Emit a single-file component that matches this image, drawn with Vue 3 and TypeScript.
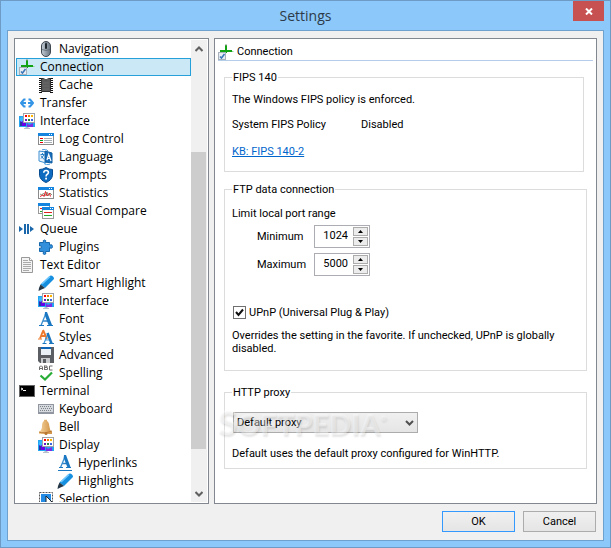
<script setup lang="ts">
import { computed, ref } from 'vue'

interface TreeItem {
  label: string
  icon: string
  level: number
}

const items: TreeItem[] = [
  { label: 'Navigation', icon: 'mouse', level: 1 },
  { label: 'Connection', icon: 'connection', level: 0 },
  { label: 'Cache', icon: 'chip', level: 1 },
  { label: 'Transfer', icon: 'transfer', level: 0 },
  { label: 'Interface', icon: 'display', level: 0 },
  { label: 'Log Control', icon: 'log', level: 1 },
  { label: 'Language', icon: 'language', level: 1 },
  { label: 'Prompts', icon: 'shield', level: 1 },
  { label: 'Statistics', icon: 'stats', level: 1 },
  { label: 'Visual Compare', icon: 'compare', level: 1 },
  { label: 'Queue', icon: 'queue', level: 0 },
  { label: 'Plugins', icon: 'puzzle', level: 1 },
  { label: 'Text Editor', icon: 'document', level: 0 },
  { label: 'Smart Highlight', icon: 'marker', level: 1 },
  { label: 'Interface', icon: 'display', level: 1 },
  { label: 'Font', icon: 'font', level: 1 },
  { label: 'Styles', icon: 'styles', level: 1 },
  { label: 'Advanced', icon: 'floppy', level: 1 },
  { label: 'Spelling', icon: 'spelling', level: 1 },
  { label: 'Terminal', icon: 'terminal', level: 0 },
  { label: 'Keyboard', icon: 'keyboard', level: 1 },
  { label: 'Bell', icon: 'bell', level: 1 },
  { label: 'Display', icon: 'display', level: 1 },
  { label: 'Hyperlinks', icon: 'hyperlink', level: 2 },
  { label: 'Highlights', icon: 'marker', level: 2 },
  { label: 'Selection', icon: 'selection', level: 1 },
]

const selected = ref(1)
const minPort = ref(1024)
const maxPort = ref(5000)
const upnp = ref(true)
const proxy = ref('default')

const scroll = { before: 95, thumb: 297, after: 36 }
const current = computed(() => items[selected.value])
</script>

<template>
  <div class="window">
    <svg class="defs" width="0" height="0" aria-hidden="true">
      <linearGradient id="g-blue" x1="0" y1="0" x2="1" y2="1">
        <stop offset="0" stop-color="#5fb4ee" />
        <stop offset="1" stop-color="#0d5fa8" />
      </linearGradient>
      <linearGradient id="g-steel" x1="0" y1="0" x2="1" y2="0">
        <stop offset="0" stop-color="#c3ccd4" />
        <stop offset="1" stop-color="#66727e" />
      </linearGradient>
      <linearGradient id="g-gold" x1="0" y1="0" x2="1" y2="0">
        <stop offset="0" stop-color="#f6d39c" />
        <stop offset="1" stop-color="#cf9144" />
      </linearGradient>
      <symbol id="mouse" viewBox="0 0 16 16">
        <rect x="3.500" y=".5" width="9" height="15" rx="4.500" fill="url(#g-steel)" stroke="#3f4851" />
        <path d="M8 1v7M4 8.500q4 2 8 0" fill="none" stroke="#56616c" stroke-width=".7" />
        <rect x="7" y="2" width="2" height="6" rx="1" fill="#20272e" />
      </symbol>
      <symbol id="connection" viewBox="0 0 16 16">
        <path d="M9 7.500h6.500" stroke="#8fd48f" stroke-width="1" />
        <path d="M7 1h2v8h-2zM2 6h12v2h-12z" fill="#12a312" />
        <path d="M7.500 0h1v2h-1z" fill="#8a9a8a" />
        <rect x=".5" y="8.500" width="7" height="7" fill="#e8edf3" stroke="#a9b2bb" />
        <path d="M2 12.500l1.500 1.500L6.500 10" fill="none" stroke="#3b76b8" stroke-width="1.500" />
      </symbol>
      <symbol id="chip" viewBox="0 0 16 16">
        <path d="M2.500 1v15M13.500 1v15" stroke="#111" stroke-width="3" stroke-dasharray="1 1" />
        <path d="M3.500 1.500h2q2.500 3 5 0h2v13h-9z" fill="#5c5c5c" stroke="#303030" />
        <path d="M5 6h6M5 9h6M5 12h6" stroke="#686868" />
      </symbol>
      <symbol id="transfer" viewBox="0 0 16 16">
        <path d="M6.500 4.500H5L2 8l3 3.500h1.500M9.500 4.500H11L14 8l-3 3.500H9.500" fill="none" stroke="#3494e6" stroke-width="2" stroke-linejoin="round" />
        <path d="M2 7h5v2H2zM9 7h5v2H9z" fill="#3494e6" />
      </symbol>
      <symbol id="display" viewBox="0 0 16 16">
        <path d="M0 3h14v3h2v8H0z" fill="#24a5f1" />
        <path d="M1 6h6v7H1z" fill="#6500e8" />
        <path d="M1 9h2v4H1z" fill="#2636a3" />
        <path d="M8 10l2 2 4-2v4H8z" fill="#7a2de5" />
        <path d="M1 5l2-1 2 2-2 3-2-1z" fill="#36bafd" />
        <path d="M5 15.500h6M6.500 14.500h3" stroke="#b5c0cb" />
        <rect x="4.500" y=".5" width="11" height="9" fill="#fff" stroke="#9da3a8" />
        <path d="M6 2h2v2H6z" fill="#f00" /><path d="M9 2h2v2H9z" fill="#f37a00" /><path d="M12 2h2v2h-2z" fill="#ffb400" />
        <path d="M6 6h2v2H6z" fill="#6319c8" /><path d="M9 6h2v2H9z" fill="#24813a" /><path d="M12 6h2v2h-2z" fill="#3b65dd" />
      </symbol>
      <symbol id="log" viewBox="0 0 16 16">
        <rect x=".5" y="2.500" width="15" height="11" fill="#fff" stroke="#8b8b8b" />
        <path d="M0 2h16v3H0z" fill="#1584df" /><path d="M11 3.500h1M13 3.500h1" stroke="#fff" />
        <path d="M2 7.500h3" stroke="#ef0000" /><path d="M2 9.500h3" stroke="#00a526" /><path d="M2 11.500h3" stroke="#ef0000" />
        <path d="M6 7.500h8M6 9.500h8M6 11.500h8" stroke="#a6aeb5" />
      </symbol>
      <symbol id="language" viewBox="0 0 16 16">
        <path d="M1 2l7 1v11l-7-2z" fill="#eef6fd" stroke="#3c8fd2" />
        <path d="M7 2l7 2v10l-7-1z" fill="#176db9" stroke="#0e5ca0" />
        <path d="M2.500 5.500h4M4.500 4v2M3 9.500l3-3.500M3 6.500l3 4" fill="none" stroke="#2a80c6" />
        <path d="M9 11l1.700-5.500L13 12M9.500 9.500h3" fill="none" stroke="#fff" stroke-width="1.200" />
        <path d="M4 .8q4-1.500 6 1M12 15.200q-4 1.300-6-.7" fill="none" stroke="#4d9ddd" />
      </symbol>
      <symbol id="shield" viewBox="0 0 16 16">
        <path d="M8 .5q3 2 6.500 2v6q-1 5-6.500 7-5.500-2-6.500-7v-6Q5 2.500 8 .5z" fill="#0f6bc0" stroke="#084d91" />
        <path d="M5.700 5.700q.2-2.200 2.400-2.200 2.300 0 2.300 2 0 1.300-1.400 2-.9.500-.9 1.900" fill="none" stroke="#fff" stroke-width="1.600" />
        <rect x="7.200" y="10.700" width="1.800" height="1.800" fill="#fff" />
      </symbol>
      <symbol id="stats" viewBox="0 0 16 16">
        <rect x=".5" y="2.500" width="15" height="11" fill="#fff" stroke="#8b8b8b" />
        <path d="M0 2h16v3H0z" fill="#1584df" /><path d="M11 3.500h1M13 3.500h1" stroke="#fff" />
        <path d="M2 9l2 1 1.500-2L7 11l2-4 1.500 4L12 8l2 2" fill="none" stroke="#8b9a7e" />
        <path d="M2 11.500l3-1.500 1 1.500L7.500 6.500 9 11l2.500-3 1 3.500" fill="none" stroke="#e3242c" />
      </symbol>
      <symbol id="compare" viewBox="0 0 16 16">
        <rect x=".5" y=".5" width="11" height="10" fill="#fff" stroke="#999" />
        <path d="M0 0h12v3H0z" fill="#1584df" /><path d="M2 5.500h3" stroke="#e32020" /><path d="M2 8.500h3" stroke="#24ab2a" />
        <rect x="4.500" y="4.500" width="11" height="11" fill="#fff" stroke="#999" />
        <path d="M4 4h12v3H4z" fill="#1584df" /><path d="M12 5.500h1M14 5.500h1" stroke="#fff" />
        <path d="M6 9.500h8" stroke="#e32020" /><path d="M6 12.500h8" stroke="#24ab2a" />
      </symbol>
      <symbol id="queue" viewBox="0 0 16 16">
        <path d="M0 5l4 3-4 3zM11 5l4 3-4 3z" fill="#1b67ab" /><path d="M5 3h2v10H5zM8 3h2v10H8z" fill="#1b67ab" />
      </symbol>
      <symbol id="puzzle" viewBox="0 0 16 16">
        <path d="M1.500 3.500h4q-1-2.500 1-2.500t1 2.500h4V6q3-1.200 3 1.500t-3 1.200v3.800h-4q1.200 3-1 3t-1-3h-4V9q2 1 2-1t-2-1z" fill="#318fdb" stroke="#1769ae" />
      </symbol>
      <symbol id="document" viewBox="0 0 16 16">
        <path d="M2.500.5h8l3 3v12h-11z" fill="#f4f4f4" stroke="#999" /><path d="M10.500.5v3h3" fill="#fff" stroke="#999" />
        <path d="M4 3.500h5M4 5.500h8M4 7.500h8M4 9.500h8M4 11.500h8M4 13.500h6" stroke="#aaa" />
      </symbol>
      <symbol id="marker" viewBox="0 0 16 16">
        <path d="M2.500 9.500L11 1.500q2-2 4 0t0 3.500L7 13z" fill="#168fdf" />
        <path d="M4 9l8-7.500" stroke="#72caff" stroke-width="1.500" />
        <path d="M2.500 9.500L7 13l-3 1.200-3.500 1.800.5-3z" fill="#253746" />
      </symbol>
      <symbol id="font" viewBox="0 0 16 16">
        <path d="M3 14.500L7.800 2.500M5 10h6" fill="none" stroke="url(#g-blue)" stroke-width="1.300" />
        <path d="M7 1h2l5 13h-3.500L6.700 4z" fill="#1a77c2" /><path d="M1 14h5v1H1zM9 14h6v1H9z" fill="#1a77c2" />
      </symbol>
      <symbol id="styles" viewBox="0 0 16 16">
        <path d="M2 9.500L5 2M3 7h4.500M5 1l4 9" fill="none" stroke="#ee782b" stroke-width="1.900" />
        <path d="M0 10h4M7 9.500h2" stroke="#ee782b" />
        <path d="M6 14l4-9M7 11h5" fill="none" stroke="#3d98dc" stroke-width="1.200" />
        <path d="M9.500 4l4 10.500" stroke="#1c76be" stroke-width="2.500" />
        <path d="M4.500 14.500h4M11 14.500h5" stroke="#1c76be" />
      </symbol>
      <symbol id="floppy" viewBox="0 0 16 16">
        <path d="M0 0h16v16H2l-2-2z" fill="#5b5f63" /><path d="M3 0h10v8H3z" fill="#eaf2f8" />
        <path d="M3 0h10v2H3z" fill="#0e64b4" /><path d="M3 11h9v5H3z" fill="#c9cdd0" /><path d="M5 12h3v4H5z" fill="#5b5f63" />
      </symbol>
      <symbol id="spelling" viewBox="0 0 16 16">
        <path d="M1.500 5V2l1-1h1l1 1v3M1.500 3.500h3M6.500.5V5M6.500 1h2.500v1.500h-2M7 4.500h2.500v-2M14.500 1h-3v4h3" fill="none" stroke="#6f6f6f" />
        <path d="M2.500 10.500L7 14.500 14 7.500" fill="none" stroke="#27ad35" stroke-width="2.200" />
      </symbol>
      <symbol id="terminal" viewBox="0 0 16 16">
        <path d="M0 2h16v12H0z" fill="#666" /><path d="M1 3h14v10H1z" fill="#000" /><path d="M2 5l2 1-2 1M4 7.500h3" fill="none" stroke="#fff" />
      </symbol>
      <symbol id="keyboard" viewBox="0 0 16 16">
        <rect x="0" y="3" width="16" height="10" fill="#9097a0" /><path d="M1 4h14v7H1z" fill="#d6dade" />
        <path d="M2 5.500h12M3 7.500h11M2 9.500h12" stroke="#7c838b" stroke-dasharray="1 1" />
      </symbol>
      <symbol id="bell" viewBox="0 0 16 16">
        <path d="M6 2V.8h3V2q2 1 2.300 5 .3 4 2.700 6v2H1v-2q3-2 3-6t2-5z" fill="url(#g-gold)" />
        <path d="M1 13q5 2 13-1" fill="none" stroke="#b87633" /><circle cx="8" cy="14.500" r="1.500" fill="#b97832" />
      </symbol>
      <symbol id="hyperlink" viewBox="0 0 16 16">
        <path d="M3.500 12.500L8 1.500M5 8.500h6" fill="none" stroke="url(#g-blue)" stroke-width="1.300" />
        <path d="M7 0h2l4.500 12h-3.200L6.700 3z" fill="#1a77c2" /><path d="M2 12h4v1H2zM9 12h5v1H9zM1 15h14v1H1z" fill="#1a77c2" />
      </symbol>
      <symbol id="selection" viewBox="0 0 16 16">
        <rect x="1.500" y="1.500" width="13" height="13" fill="none" stroke="#555" stroke-dasharray="2 1" />
        <path d="M3 3h10v10H3z" fill="#238be3" /><path d="M8 5l6 6-3 .5L13 15l-2 1-1.500-3L8 14z" fill="#fff" stroke="#14242f" />
      </symbol>
    </svg>

    <header class="titlebar">
      <h1 class="title">Settings</h1>
      <button class="close" type="button" aria-label="Close">
        <svg width="8" height="7" viewBox="0 0 8 7"><path d="M1 .5l6 6M7 .5l-6 6" stroke="#fff" stroke-width="2" /></svg>
      </button>
    </header>

    <form class="client" @submit.prevent>
      <div class="panes">
        <nav class="tree" aria-label="Sections">
          <ul class="tree-list">
            <li v-for="(item, i) in items" :key="i">
              <button
                type="button"
                class="node"
                :class="['level-' + item.level, { active: i === selected }]"
                @click="selected = i"
              >
                <svg class="icon" width="16" height="16" aria-hidden="true"><use :href="'#' + item.icon" /></svg>
                <span>{{ item.label }}</span>
              </button>
            </li>
          </ul>
          <div class="scrollbar">
            <button type="button" class="scroll-btn" aria-label="Scroll up">
              <svg width="8" height="6" viewBox="0 0 8 6"><path d="M.5 5L4 1.500 7.500 5" fill="none" stroke="#606060" stroke-width="2" /></svg>
            </button>
            <div :style="{ flexGrow: scroll.before }"></div>
            <div class="thumb" :style="{ flexGrow: scroll.thumb }"></div>
            <div :style="{ flexGrow: scroll.after }"></div>
            <button type="button" class="scroll-btn" aria-label="Scroll down">
              <svg width="8" height="6" viewBox="0 0 8 6"><path d="M.5 1L4 4.500 7.500 1" fill="none" stroke="#606060" stroke-width="2" /></svg>
            </button>
          </div>
        </nav>

        <main class="page">
          <h2 class="page-head">
            <svg width="16" height="16" aria-hidden="true"><use :href="'#' + current.icon" /></svg>
            <span>{{ current.label }}</span>
          </h2>

          <fieldset class="group fips">
            <legend>FIPS 140</legend>
            <p>The Windows FIPS policy is enforced.</p>
            <dl class="policy">
              <dt>System FIPS Policy</dt>
              <dd>Disabled</dd>
            </dl>
            <p><a href="#fips-140-2">KB: FIPS 140-2</a></p>
          </fieldset>

          <fieldset class="group ftp">
            <legend>FTP data connection</legend>
            <p>Limit local port range</p>
            <div class="ports">
              <label for="port-min">Minimum</label>
              <div class="spinner">
                <input id="port-min" v-model.number="minPort" type="number" />
                <div class="steps">
                  <button type="button" aria-label="Increase minimum" @click="minPort++">
                    <svg width="5" height="3" viewBox="0 0 5 3"><path d="M0 3L2.500 0 5 3z" /></svg>
                  </button>
                  <button type="button" aria-label="Decrease minimum" @click="minPort--">
                    <svg width="5" height="3" viewBox="0 0 5 3"><path d="M0 0h5L2.500 3z" /></svg>
                  </button>
                </div>
              </div>
              <label for="port-max">Maximum</label>
              <div class="spinner">
                <input id="port-max" v-model.number="maxPort" type="number" />
                <div class="steps">
                  <button type="button" aria-label="Increase maximum" @click="maxPort++">
                    <svg width="5" height="3" viewBox="0 0 5 3"><path d="M0 3L2.500 0 5 3z" /></svg>
                  </button>
                  <button type="button" aria-label="Decrease maximum" @click="maxPort--">
                    <svg width="5" height="3" viewBox="0 0 5 3"><path d="M0 0h5L2.500 3z" /></svg>
                  </button>
                </div>
              </div>
            </div>
            <label class="check">
              <span class="box">
                <input v-model="upnp" type="checkbox" />
                <svg v-if="upnp" width="13" height="13" viewBox="0 0 13 13"><path d="M3 6l2.500 3L10 3.500" fill="none" stroke="#111" stroke-width="2" /></svg>
              </span>
              <span>UPnP (Universal Plug &amp; Play)</span>
            </label>
            <p class="note">Overrides the setting in the favorite. If unchecked, UPnP is globally disabled.</p>
          </fieldset>

          <fieldset class="group proxy">
            <legend>HTTP proxy</legend>
            <div class="combo">
              <select v-model="proxy" aria-label="HTTP proxy">
                <option value="default">Default proxy</option>
                <option value="none">No proxy</option>
              </select>
              <svg width="9" height="6" viewBox="0 0 9 6"><path d="M1 1l3.500 3.500L8 1" fill="none" stroke="#505050" stroke-width="2" /></svg>
              <span class="watermark"><span class="big">S</span>OFTPEDIA<sup>®</sup></span>
            </div>
            <p>Default uses the default proxy configured for WinHTTP.</p>
          </fieldset>
        </main>
      </div>

      <footer class="actions">
        <button type="submit" class="btn primary">OK</button>
        <button type="button" class="btn">Cancel</button>
      </footer>
    </form>
  </div>
</template>

<style>
body {
  background: #8dc8fb;
}
</style>

<style scoped>
* {
  box-sizing: border-box;
}
.window {
  display: flex;
  flex-direction: column;
  height: 100vh;
  padding: 0 6px 6px;
  border: 1px solid #6d9bc5;
  background: #8dc8fb;
  font: 11px/13px Roboto, "Liberation Sans", sans-serif;
  color: #000;
}
.defs {
  position: absolute;
}
button,
input,
select {
  font: inherit;
  color: inherit;
  margin: 0;
  border-radius: 0;
}
p,
dl,
dd,
h1,
h2,
ul {
  margin: 0;
  padding: 0;
}
svg {
  display: block;
}
.titlebar {
  display: grid;
  grid-template-columns: 31px 1fr 31px;
  height: 29px;
  flex: none;
}
.title {
  grid-column: 2;
  font-family: "Open Sans", sans-serif;
  font-size: 14px;
  line-height: 30px;
  font-weight: 400;
  text-align: center;
  color: #2c3a47;
}
.close {
  display: grid;
  place-items: center;
  height: 20px;
  padding: 0;
  border: 0;
  background: #c75050;
}
.client {
  flex: 1;
  min-height: 0;
  display: flex;
  flex-direction: column;
  padding: 7px 6px 8px;
  border: 1px solid #6fa1ce;
  background: #f0f0f0;
}
.panes {
  flex: 1;
  min-height: 0;
  display: grid;
  grid-template-columns: 195px 1fr;
  grid-template-rows: minmax(0, 1fr);
  gap: 5px;
}
.tree,
.page {
  border: 1px solid #828790;
  background: #fff;
  overflow: hidden;
}
.tree {
  display: flex;
  padding: 1px;
}
.tree-list {
  flex: 1;
  list-style: none;
  overflow: hidden;
}
.node {
  display: flex;
  align-items: center;
  gap: 5px;
  width: 100%;
  height: 18px;
  padding: 0 2px;
  border: 1px solid transparent;
  background: none;
  font-family: "Open Sans", sans-serif;
  font-size: 12px;
  line-height: 16px;
  white-space: nowrap;
}
.node.active {
  border-color: #26a0da;
  background: #cbe8f6;
}
.level-1 {
  padding-left: 21px;
}
.level-2 {
  padding-left: 40px;
}
.scrollbar {
  display: flex;
  flex-direction: column;
  width: 16px;
  background: #f0f0f0;
}
.scroll-btn {
  display: grid;
  place-items: center;
  height: 17px;
  flex: none;
  padding: 0;
  border: 0;
  background: none;
}
.thumb {
  background: #cdcdcd;
  width: 15px;
}
.page {
  padding: 5px 3px;
}
.page-head {
  display: flex;
  align-items: center;
  gap: 3px;
  height: 17px;
  border-bottom: 1px solid #b5cde9;
  font-size: 11px;
  line-height: 14px;
  font-weight: 400;
}
.group {
  display: flow-root;
  margin: 0 6px;
  padding: 0 7px;
  border: 1px solid #dcdcdc;
  min-width: 0;
}
.group legend {
  padding: 0 1px;
  margin: 0;
}
.fips {
  margin: 10px 9px 0 6px;
  padding-bottom: 13px;
}
.fips > p:first-of-type {
  padding-top: 9px;
}
.policy {
  display: grid;
  grid-template-columns: 129px 1fr;
  padding: 12px 0 14px;
}
a {
  color: #0066cc;
}
.ftp {
  margin-top: 11px;
  padding-bottom: 15px;
}
.ftp > p:first-of-type {
  padding-top: 11px;
}
.ports {
  display: grid;
  grid-template-columns: 57px 56px;
  align-items: center;
  gap: 5px 0;
  padding: 5px 0 0 25px;
}
.spinner {
  display: flex;
  height: 23px;
  padding: 1px;
  border: 1px solid #abadb3;
  background: #fff;
}
.spinner input {
  flex: 1;
  min-width: 0;
  padding: 0 5px 2px;
  border: 0;
  background: none;
  text-align: right;
  appearance: textfield;
  outline: none;
}
.spinner input::-webkit-inner-spin-button {
  appearance: none;
  margin: 0;
}
.steps {
  display: grid;
  grid-template-rows: 1fr 1fr;
  gap: 1px;
  width: 15px;
}
.steps button {
  display: grid;
  place-items: center;
  padding: 0;
  border: 1px solid #acacac;
  background: #ececec;
}
.check {
  display: flex;
  align-items: center;
  gap: 3px;
  padding: 30px 0 10px 1px;
}
.box,
.combo {
  display: grid;
}
.box > *,
.combo > * {
  grid-area: 1 / 1;
}
.box input {
  appearance: none;
  width: 13px;
  height: 13px;
  border: 1px solid #707070;
  background: #fff;
}
.box svg {
  pointer-events: none;
}
.proxy {
  margin-top: 15px;
  padding-bottom: 8px;
}
.combo {
  position: relative;
  width: 185px;
  margin: 13px 0 14px 1px;
  align-items: center;
}
.combo select {
  appearance: none;
  height: 21px;
  padding: 0 20px 0 3px;
  border: 1px solid #acacac;
  background: linear-gradient(#f0f0f0, #e5e5e5);
}
.combo svg {
  justify-self: end;
  margin-right: 4px;
  pointer-events: none;
}
.watermark {
  position: absolute;
  left: -15px;
  top: -8px;
  font: 900 29px/36px Lato, sans-serif;
  color: rgba(255, 255, 255, 0.4);
  text-shadow: 1px 2px 2px rgba(0, 0, 0, 0.1);
  white-space: nowrap;
  pointer-events: none;
}
.watermark .big {
  font-size: 34px;
}
.watermark sup {
  font-size: 8px;
  vertical-align: 14px;
  line-height: 8px;
}
.actions {
  display: flex;
  justify-content: flex-end;
  gap: 8px;
  padding: 7px 1px 0 0;
}
.btn {
  width: 73px;
  height: 21px;
  padding: 0;
  border: 1px solid #acacac;
  background: linear-gradient(#f0f0f0, #e5e5e5);
}
.btn.primary {
  border-color: #3399ff;
}
</style>
